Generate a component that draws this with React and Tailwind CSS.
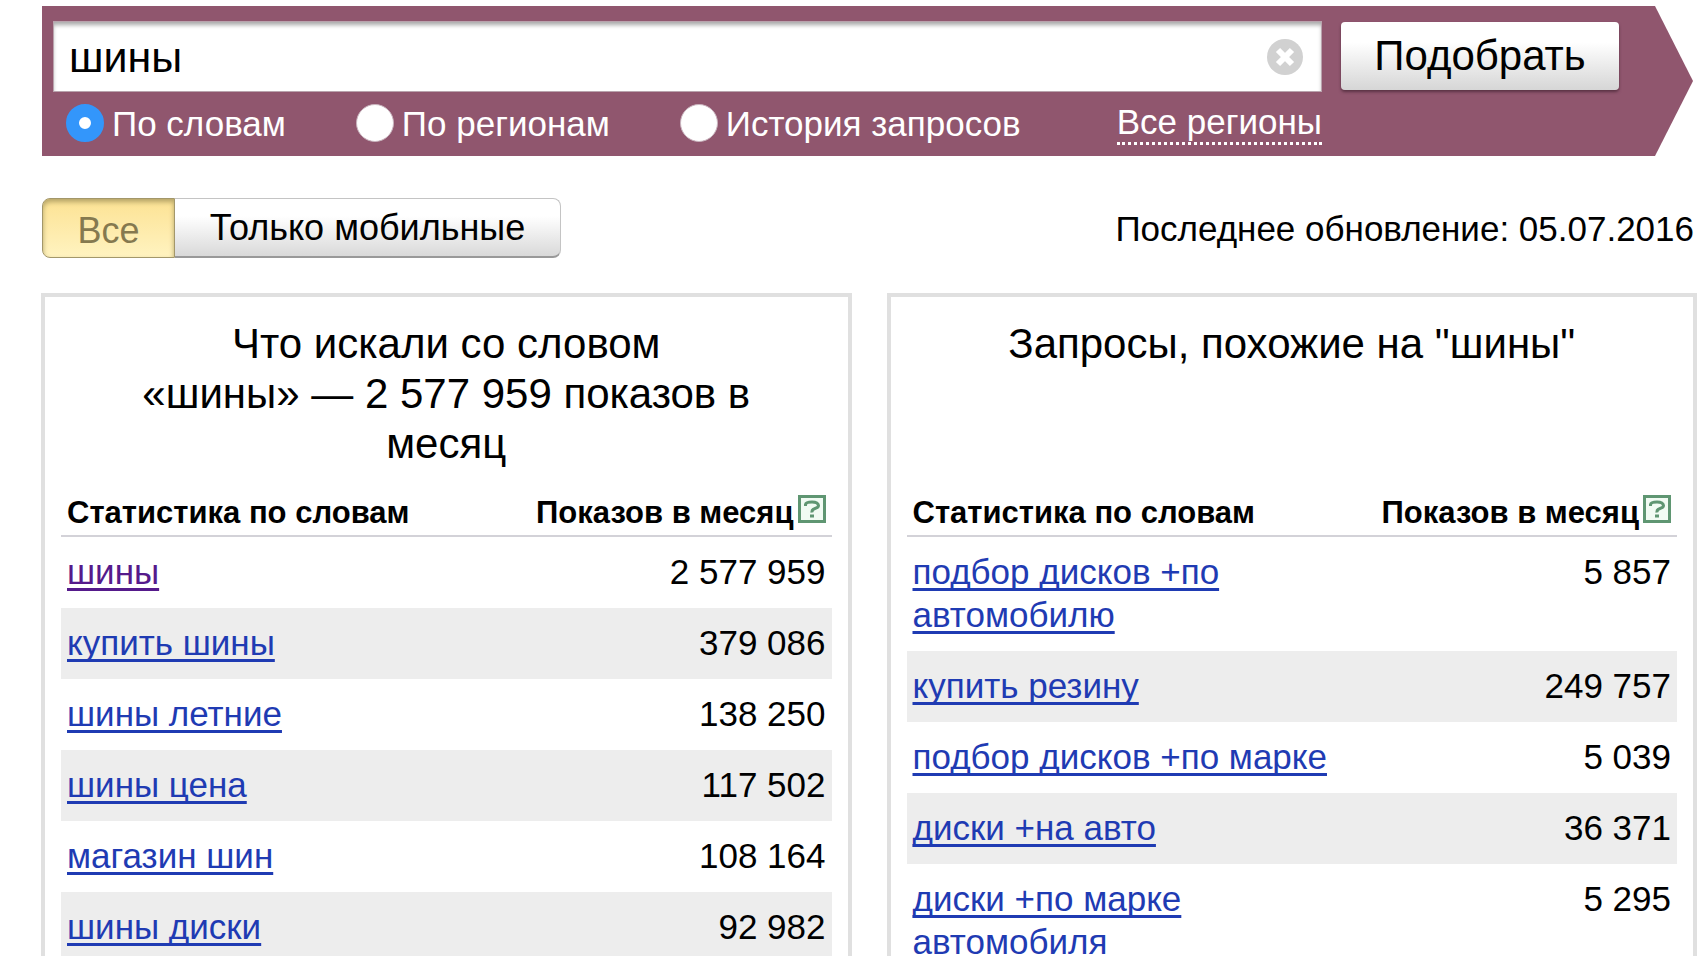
import { useState } from 'react';
import clsx from 'clsx';

const modes = [
  { id: 'words', label: 'По словам' },
  { id: 'regions', label: 'По регионам' },
  { id: 'history', label: 'История запросов' },
];

const wordStats = [
  { query: 'шины', shows: '2 577 959', visited: true },
  { query: 'купить шины', shows: '379 086' },
  { query: 'шины летние', shows: '138 250' },
  { query: 'шины цена', shows: '117 502' },
  { query: 'магазин шин', shows: '108 164' },
  { query: 'шины диски', shows: '92 982' },
];

const similarStats = [
  { query: 'подбор дисков +по автомобилю', shows: '5 857' },
  { query: 'купить резину', shows: '249 757' },
  { query: 'подбор дисков +по марке', shows: '5 039' },
  { query: 'диски +на авто', shows: '36 371' },
  { query: 'диски +по марке автомобиля', shows: '5 295' },
];

function ClearIcon() {
  return (
    <svg viewBox="0 0 36 36" className="size-9" aria-hidden="true">
      <circle cx="18" cy="18" r="18" fill="#d1d1d1" />
      <path d="M11 11l14 14M25 11L11 25" stroke="#fff" strokeWidth="6" />
    </svg>
  );
}

function SearchForm() {
  const [query, setQuery] = useState('шины');
  const [mode, setMode] = useState('words');

  return (
    <form className="flex" onSubmit={(e) => e.preventDefault()}>
      <div className="flex h-[150px] flex-1 bg-[#90566e] pl-[11px] pr-9 pt-[15px]">
        <div className="flex-1">
          <div className="flex h-[71px] items-center border border-[#b9a3ad] bg-white pl-[15px] pr-[18px] shadow-[inset_0_4px_4px_-1px_#a8a8a8]">
            <input
              type="text"
              aria-label="Запрос"
              value={query}
              onChange={(e) => setQuery(e.target.value)}
              className="min-w-0 flex-1 bg-transparent text-[43px] leading-[50px] outline-none"
            />
            <button type="button" aria-label="Очистить" onClick={() => setQuery('')}>
              <ClearIcon />
            </button>
          </div>
          <div className="flex h-[62px] items-center justify-between pl-[13px] text-[35px] leading-[43px] text-white">
            <div className="flex gap-[70px]">
              {modes.map((item) => (
                <label key={item.id} className="flex items-center gap-2">
                  <input
                    type="radio"
                    name="mode"
                    value={item.id}
                    checked={mode === item.id}
                    onChange={() => setMode(item.id)}
                    className="size-[38px] appearance-none rounded-full border border-[#c9b4be] bg-white checked:border-[13px] checked:border-[#3396fb]"
                  />
                  {item.label}
                </label>
              ))}
            </div>
            <a href="#regions" className="border-b-3 border-dotted border-white leading-[41px]">
              Все регионы
            </a>
          </div>
        </div>
        <button
          type="submit"
          className="ml-[19px] mt-px h-[68px] w-[278px] rounded-[4px] bg-linear-to-b from-white from-30% to-[#d6d6d6] text-[42px] leading-[50px] shadow-[0_2px_3px_#5a3244]"
        >
          Подобрать
        </button>
      </div>
      <svg viewBox="0 0 38 150" className="h-[150px] w-[38px]" aria-hidden="true">
        <path d="M0 0L38 75L0 150Z" fill="#90566e" />
      </svg>
    </form>
  );
}

function DeviceTabs() {
  const [device, setDevice] = useState('all');

  const tabClass = (id) =>
    clsx(
      'h-[60px] border',
      device === id
        ? 'border-[#a3976a] bg-linear-to-b from-[#fce293] to-[#fff3c0] pt-1 text-[#85794f] shadow-[inset_0_3px_5px_#b5a468]'
        : 'border-[#c4c4c4] border-b-2 border-b-[#999] bg-linear-to-b from-white from-30% to-[#d9d9d9]'
    );

  return (
    <div className="flex text-[36px] leading-[43px]">
      <button
        type="button"
        onClick={() => setDevice('all')}
        className={clsx(tabClass('all'), 'w-[133px] rounded-l-[8px]')}
      >
        Все
      </button>
      <button
        type="button"
        onClick={() => setDevice('mobile')}
        className={clsx(tabClass('mobile'), 'w-[386px] rounded-r-[8px] border-l-0')}
      >
        Только мобильные
      </button>
    </div>
  );
}

function HelpIcon() {
  return (
    <svg viewBox="0 0 28 28" className="size-7" aria-hidden="true">
      <rect x="1.5" y="1.5" width="25" height="25" fill="#f1fbf3" stroke="#5f9672" strokeWidth="3" />
      <path d="M7.500 11V9.500Q8 7 14 7T20.500 10.500Q20.500 12.500 17 13.500T14 17.500" fill="none" stroke="#5f9672" strokeWidth="3" />
      <path d="M12 19.500h4v3h-4z" fill="#5f9672" />
    </svg>
  );
}

function StatsCard({ title, rows }) {
  return (
    <section className="border-4 border-[#e0e0e0] px-[16px] pt-[22px]">
      <h2 className="min-h-[150px] px-[60px] text-center text-[42px] leading-[50px]">{title}</h2>
      <table className="w-full table-fixed border-separate border-spacing-0">
        <thead>
          <tr className="h-[68px] text-[31px] leading-[36px]">
            <th className="w-[60%] border-b-2 border-[#d3d2d8] px-[6px] pb-1 text-left align-bottom font-bold">
              Статистика по словам
            </th>
            <th className="border-b-2 border-[#d3d2d8] px-[6px] pb-1 align-bottom font-bold">
              <div className="flex items-baseline justify-end gap-1 whitespace-nowrap">
                Показов в месяц
                <a href="#help" aria-label="Справка">
                  <HelpIcon />
                </a>
              </div>
            </th>
          </tr>
        </thead>
        <tbody>
          {rows.map((row) => (
            <tr key={row.query} className="align-top text-[35px] leading-[43px] even:bg-[#ededed]">
              <td className="px-[6px] pb-[15px] pt-[13px]">
                <a
                  href="#query"
                  className={clsx(
                    'underline decoration-3 underline-offset-4 [text-decoration-skip-ink:none]',
                    row.visited ? 'text-[#551a8b]' : 'text-[#1f3bb3]'
                  )}
                >
                  {row.query}
                </a>
              </td>
              <td className="px-[6px] pb-[15px] pt-[13px] text-right">{row.shows}</td>
            </tr>
          ))}
        </tbody>
      </table>
    </section>
  );
}

export default function App() {
  return (
    <main className="h-screen overflow-hidden bg-white pl-[41px] pr-[3px] pt-[6px] font-['Liberation_Sans',Arial,sans-serif] text-black">
      <div className="pl-px pr-1">
        <SearchForm />
      </div>
      <div className="mt-[42px] flex items-center justify-between pl-px">
        <DeviceTabs />
        <p className="pr-[3px] text-[35px] leading-[43px]">Последнее обновление: 05.07.2016</p>
      </div>
      <div className="mt-[35px] grid grid-cols-2 gap-[35px]">
        <StatsCard
          title={'Что искали со словом «шины»\u00a0— 2\u00a0577\u00a0959 показов в месяц'}
          rows={wordStats}
        />
        <StatsCard title={'Запросы, похожие на "шины"'} rows={similarStats} />
      </div>
    </main>
  );
}
